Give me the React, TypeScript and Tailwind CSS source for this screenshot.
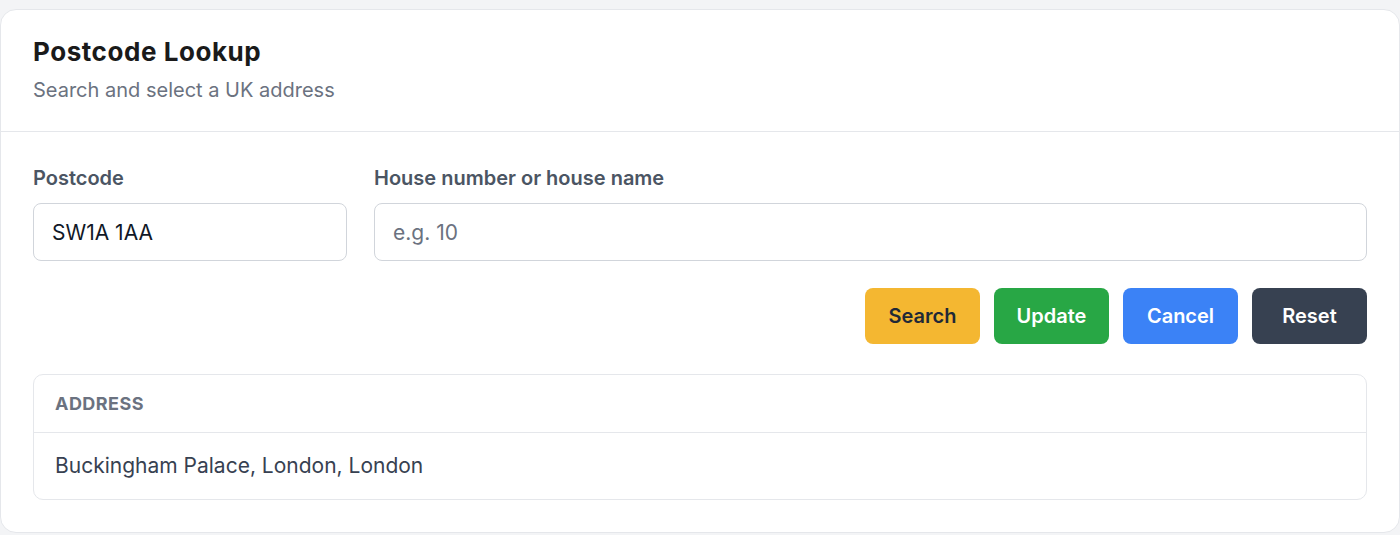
import React from 'react';

const buttons = [
    { label: 'Search', cls: 'bg-[#f4b731] text-[#1f2937]' },
    { label: 'Update', cls: 'bg-[#28a745] text-white' },
    { label: 'Cancel', cls: 'bg-[#3b82f6] text-white' },
    { label: 'Reset', cls: 'bg-[#374151] text-white' },
];

export default function App() {
    return (
        <div className="min-h-[535px] bg-[#f3f4f6] pt-[9px] font-['Inter',sans-serif]">
            <div className="rounded-2xl border border-[#e5e7eb] bg-white">
                <div className="border-b border-[#e5e7eb] px-8 pt-[26px] pb-[27px]">
                    <h1 className="text-[26px] leading-8 font-bold tracking-[0.55px] text-[#1a1a1a]">Postcode Lookup</h1>
                    <p className="mt-[8px] text-[20px] leading-7 text-[#6b7280]">Search and select a UK address</p>
                </div>

                <div className="px-8 pt-8 pb-8">
                    <div className="flex gap-[27px]">
                        <div className="w-[314px]">
                            <label className="block text-[20px] leading-7 font-semibold text-[#4b5563]">Postcode</label>
                            <input
                                defaultValue="SW1A 1AA"
                                className="mt-[11px] h-[58px] w-full rounded-lg border border-[#d1d5db] px-[18px] text-[21px] text-[#111827] outline-none"
                            />
                        </div>
                        <div className="flex-1">
                            <label className="block text-[20px] leading-7 font-semibold text-[#4b5563]">House number or house name</label>
                            <input
                                placeholder="e.g. 10"
                                className="mt-[11px] h-[58px] w-full rounded-lg border border-[#d1d5db] px-[18px] text-[21px] text-[#111827] outline-none placeholder:text-[#6b7280]"
                            />
                        </div>
                    </div>

                    <div className="mt-[27px] flex justify-end gap-[14px]">
                        {buttons.map((b) => (
                            <button key={b.label} className={`h-14 w-[115px] rounded-lg text-[20px] font-semibold ${b.cls}`}>
                                {b.label}
                            </button>
                        ))}
                    </div>

                    <div className="mt-[30px] rounded-[10px] border border-[#e5e7eb]">
                        <div className="flex h-[58px] items-center border-b border-[#e5e7eb] px-[21px] text-[18px] font-bold tracking-wide text-[#6b7280]">
                            ADDRESS
                        </div>
                        <div className="flex h-[66px] items-center px-[21px] text-[21px] text-[#374151]">
                            Buckingham Palace, London, London
                        </div>
                    </div>
                </div>
            </div>
        </div>
    );
}
